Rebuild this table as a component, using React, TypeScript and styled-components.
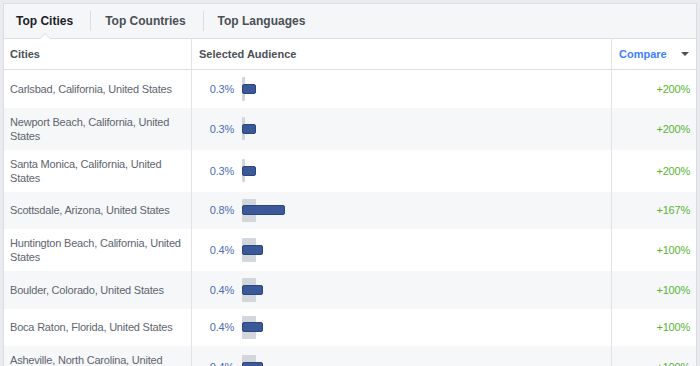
import React from 'react';
import styled, { createGlobalStyle } from 'styled-components';

const COLORS = {
  page: '#e9ebee',
  border: '#dadde1',
  line: '#e1e3e6',
  tabBg: '#f5f6f7',
  dark: '#1d2129',
  label: '#4b4f56',
  text: '#60656e',
  stripe: '#f6f7f9',
  percent: '#4f6cb3',
  link: '#4080ff',
  green: '#58b534',
  bar: '#3b5998',
  barEdge: '#2c4680',
  base: '#d3d6db',
};

const GlobalStyle = createGlobalStyle`
  html, body {
    margin: 0;
    padding: 0;
    overflow: hidden;
    background: ${COLORS.page};
  }
  body {
    font-family: 'Liberation Sans', Arial, sans-serif;
  }
`;

interface ICityRow {
  city: string;
  percent: string;
  base: number;
  value: number;
  compare: string;
}

const ROWS: ICityRow[] = [
  { city: 'Carlsbad, California, United States', percent: '0.3%', base: 3, value: 14, compare: '+200%' },
  { city: 'Newport Beach, California, United States', percent: '0.3%', base: 3, value: 14, compare: '+200%' },
  { city: 'Santa Monica, California, United States', percent: '0.3%', base: 3, value: 14, compare: '+200%' },
  { city: 'Scottsdale, Arizona, United States', percent: '0.8%', base: 14, value: 43, compare: '+167%' },
  { city: 'Huntington Beach, California, United States', percent: '0.4%', base: 14, value: 21, compare: '+100%' },
  { city: 'Boulder, Colorado, United States', percent: '0.4%', base: 14, value: 21, compare: '+100%' },
  { city: 'Boca Raton, Florida, United States', percent: '0.4%', base: 14, value: 21, compare: '+100%' },
  { city: 'Asheville, North Carolina, United States', percent: '0.4%', base: 14, value: 21, compare: '+100%' },
];

const TABS = ['Top Cities', 'Top Countries', 'Top Languages'];

const Page = styled.div`
  padding: 3px;
`;

const Panel = styled.div`
  border: 1px solid ${COLORS.border};
  background: #fff;
`;

const TabBar = styled.div`
  display: flex;
  align-items: center;
  height: 34px;
  background: ${COLORS.tabBg};
  border-bottom: 1px solid ${COLORS.border};
`;

const Tab = styled.div<{ $active: boolean }>`
  position: relative;
  display: flex;
  align-items: center;
  height: 100%;
  padding: 0 17px 0 14px;
  font-size: 12px;
  font-weight: bold;
  color: ${({ $active }) => ($active ? COLORS.dark : COLORS.label)};

  &:first-child {
    padding-left: 12px;
  }

  ${({ $active }) => $active && `
    &::before,
    &::after {
      content: '';
      position: absolute;
      left: calc(50% - 2.5px);
      bottom: -1px;
      width: 0;
      height: 0;
      border-style: solid;
      border-color: transparent;
    }
    &::before {
      margin-left: -6px;
      border-width: 0 6px 6px 6px;
      border-bottom-color: ${COLORS.border};
    }
    &::after {
      margin-left: -5px;
      border-width: 0 5px 5px 5px;
      border-bottom-color: #fff;
    }
  `}
`;

const TabDivider = styled.div`
  width: 1px;
  height: 20px;
  background: ${COLORS.border};
`;

const Row = styled.div<{ $striped?: boolean }>`
  display: grid;
  grid-template-columns: 188px 420px 1fr;
  min-height: 37.5px;
  background: ${({ $striped }) => ($striped ? COLORS.stripe : '#fff')};
`;

const HeaderRow = styled(Row)`
  min-height: 30px;
  border-bottom: 1px solid ${COLORS.border};
`;

const Cell = styled.div`
  display: flex;
  align-items: center;
  padding: 7px 6px;
  font-size: 11px;
  line-height: 14px;
  letter-spacing: -0.2px;
  color: ${COLORS.text};
  border-right: 1px solid ${COLORS.line};

  &:last-child {
    border-right: 0;
  }
`;

const HeadCell = styled(Cell)`
  padding: 0 6px;
  font-weight: bold;
  letter-spacing: 0;
  color: ${COLORS.label};

  & + & {
    padding-left: 7px;
  }
`;

const CompareHead = styled(HeadCell)`
  justify-content: space-between;
  padding-right: 7px;
  color: ${COLORS.link};
`;

const Caret = styled.span`
  width: 0;
  height: 0;
  border-style: solid;
  border-width: 4px 4px 0 4px;
  border-color: ${COLORS.label} transparent transparent transparent;
`;

const AudienceCell = styled(Cell)`
  padding: 7px 0;
  gap: 8px;
`;

const Percent = styled.span`
  width: 42px;
  text-align: right;
  color: ${COLORS.percent};
`;

const Chart = styled.div`
  display: grid;
  align-items: center;
  height: 23.5px;
`;

const BaseBar = styled.div<{ $width: number }>`
  grid-area: 1 / 1;
  align-self: stretch;
  width: ${({ $width }) => $width}px;
  background: ${COLORS.base};
  border-radius: 1px;
`;

const ValueBar = styled.div<{ $width: number }>`
  grid-area: 1 / 1;
  box-sizing: border-box;
  width: ${({ $width }) => $width}px;
  height: 10px;
  background: ${COLORS.bar};
  border: 1px solid ${COLORS.barEdge};
  border-radius: 2px;
`;

const CompareCell = styled(Cell)`
  justify-content: flex-end;
  padding-right: 6px;
  color: ${COLORS.green};
`;

export default function App() {
  return (
    <Page>
      <GlobalStyle />
      <Panel>
        <TabBar>
          {TABS.map((tab, i) => (
            <React.Fragment key={tab}>
              {i > 0 && <TabDivider />}
              <Tab $active={i === 0}>{tab}</Tab>
            </React.Fragment>
          ))}
        </TabBar>
        <HeaderRow>
          <HeadCell>Cities</HeadCell>
          <HeadCell>Selected Audience</HeadCell>
          <CompareHead>
            Compare
            <Caret />
          </CompareHead>
        </HeaderRow>
        {ROWS.map((row, i) => (
          <Row key={row.city} $striped={i % 2 === 1}>
            <Cell>{row.city}</Cell>
            <AudienceCell>
              <Percent>{row.percent}</Percent>
              <Chart>
                <BaseBar $width={row.base} />
                <ValueBar $width={row.value} />
              </Chart>
            </AudienceCell>
            <CompareCell>{row.compare}</CompareCell>
          </Row>
        ))}
      </Panel>
    </Page>
  );
}
